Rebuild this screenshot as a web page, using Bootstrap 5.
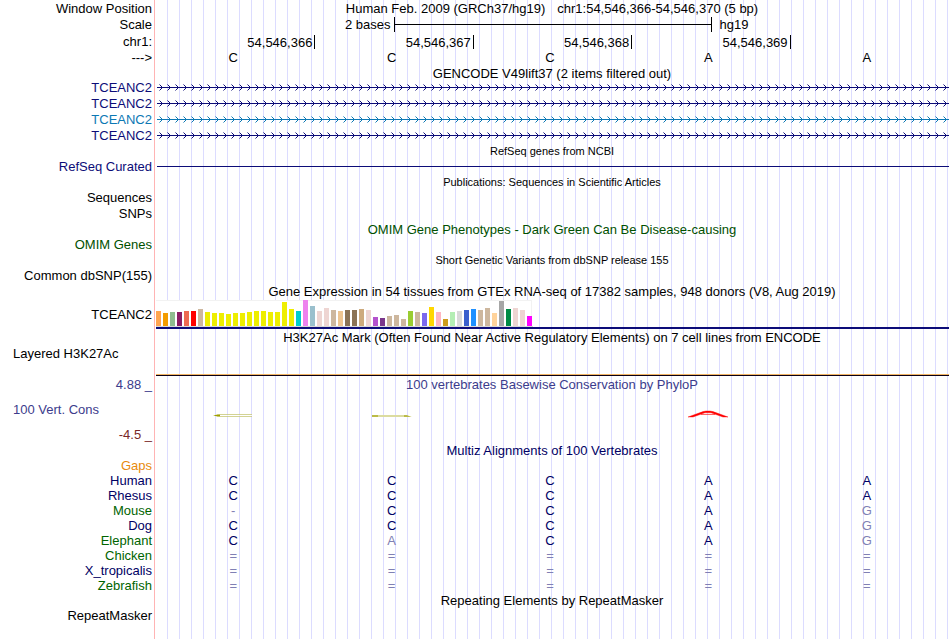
<!DOCTYPE html>
<html lang="en">
<head>
<meta charset="utf-8">
<meta name="viewport" content="width=device-width, initial-scale=1">
<title>Genome Browser hg19</title>
<link href="https://cdn.jsdelivr.net/npm/bootstrap@5.3.0/dist/css/bootstrap.min.css" rel="stylesheet">
<style>
:root { --label-w: 154px; --navy: #0c0c78; }
body { font-family: "Liberation Sans", Arial, sans-serif; font-size: 13px; line-height: 15px; color: #000; background: #fff; }
.browser {
  background:
    linear-gradient(#ffb4b4, #ffb4b4) var(--label-w) 0 / 1px 100% no-repeat,
    linear-gradient(#fff, #fff) 0 0 / 156px 100% no-repeat,
    repeating-linear-gradient(90deg, transparent 0 11px, #dcdcff 11px 12px) 156px 0;
}
.track { display: grid; grid-template-columns: var(--label-w) minmax(0, 1fr); min-height: 16px; align-items: center; white-space: nowrap; }
.track-15 { min-height: 15px; }
.track-17 { min-height: 17px; }
.track-top { align-items: start; }
.track-end { align-items: end; }
.track-tight { min-height: 0; height: 13px; align-items: start; }
.track-label { text-align: right; padding-right: 2px; }
.track-label-start { text-align: left; padding-left: 13px; }
.track-title { grid-column: 2; text-align: center; }
.title-minor { font-size: 11px; line-height: 13px; }
.bases { display: grid; grid-template-columns: repeat(5, minmax(0, 1fr)); text-align: center; padding-right: 4px; }
.ticks { display: grid; grid-template-columns: repeat(5, minmax(0, 1fr)); text-align: right; padding: 0 1px 0 3px; }
.ticks span { border-right: 1px solid #000; padding-right: 2px; height: 14px; }
.scale-from { width: 30%; text-align: right; padding-right: 3px; }
.scale-bar { width: 40%; height: 15px; border: solid #000; border-width: 0 1px; display: flex; align-items: center; }
.scale-bar i { flex: 1; height: 1px; background: #000; }
.scale-row { margin-left: 1px; }
.span-line { margin: 0 1px 0 3px; }
.gene svg { display: block; width: 100%; height: 16px; }
.c-navy { color: var(--navy); }
.c-sky { color: #0c78b4; }
.c-omim { color: #005000; }
.c-cons { color: #3c3c8c; }
.c-neg { color: #782828; }
.c-gaps { color: #e88a0c; }
.c-deep { color: #000064; }
.c-green { color: #006400; }
.faint { color: #8080b4; }
.refseq-line { height: 1px; background: var(--navy); }
.expression { margin: 0 1px 0 2px; border-bottom: 2px solid var(--navy); }
.gtex { display: inline-flex; align-items: flex-end; gap: 2px; height: 26px; background: #fff; box-shadow: inset 0 1px #f2f2f2, inset -1px 0 #f2f2f2; vertical-align: top; }
.gtex i { width: 5px; }
.gtex-base { height: 1px; width: 377px; background: #d8d8d8; }
.histone { height: 2px; margin: 0 1px 0 2px; background: #0c0014; border-top: 1px solid #f0b464; }
.histone-row { min-height: 30px; align-items: stretch; }
.cons { min-height: 66px; align-items: stretch; padding-top: 1px; }
.cons svg { display: block; margin: 18px auto 0; }
</style>
</head>
<body>
<main class="browser min-vh-100">
  <div class="track"><div class="track-label">Window Position</div><div class="d-flex justify-content-center"><span class="me-2 pe-1">Human Feb. 2009 (GRCh37/hg19)</span><span>chr1:54,546,366-54,546,370 (5 bp)</span></div></div>
  <div class="track track-17"><div class="track-label">Scale</div><div class="d-flex scale-row"><span class="scale-from">2 bases</span><span class="scale-bar"><i></i></span><span class="ms-2">hg19</span></div></div>
  <div class="track track-17"><div class="track-label">chr1:</div><div class="ticks"><span>54,546,366</span><span>54,546,367</span><span>54,546,368</span><span>54,546,369</span></div></div>
  <div class="track track-top"><div class="track-label">---&gt;</div><div class="bases"><span>C</span><span>C</span><span>C</span><span>A</span><span>A</span></div></div>

  <div class="track track-tight"><div class="track-title">GENCODE V49lift37 (2 items filtered out)</div></div>
  <svg width="0" height="0" class="d-block" aria-hidden="true"><defs>
    <pattern id="chevrons" width="8" height="16" patternUnits="userSpaceOnUse"><path d="M3 6h1v1h1v1h1v1H5v1H4v1H3v-1h1V9h1V8H4V7H3z" fill="#0c0c78"/><path d="M2 5h1v1H2zM2 11h1v1H2z" fill="#0c0c78" opacity=".5"/></pattern>
    <pattern id="chevrons-sky" width="8" height="16" patternUnits="userSpaceOnUse"><path d="M3 6h1v1h1v1h1v1H5v1H4v1H3v-1h1V9h1V8H4V7H3z" fill="#0c78b4"/><path d="M2 5h1v1H2zM2 11h1v1H2z" fill="#0c78b4" opacity=".5"/></pattern>
  </defs></svg>
  <div class="track c-navy"><div class="track-label">TCEANC2</div><div class="gene span-line"><svg><rect width="100%" height="16" fill="url(#chevrons)"/><rect y="8" width="100%" height="1" fill="#0c0c78"/></svg></div></div>
  <div class="track c-navy"><div class="track-label">TCEANC2</div><div class="gene span-line"><svg><rect width="100%" height="16" fill="url(#chevrons)"/><rect y="8" width="100%" height="1" fill="#0c0c78"/></svg></div></div>
  <div class="track c-sky"><div class="track-label">TCEANC2</div><div class="gene span-line"><svg><rect width="100%" height="16" fill="url(#chevrons-sky)"/><rect y="8" width="100%" height="1" fill="#0c78b4"/></svg></div></div>
  <div class="track c-navy"><div class="track-label">TCEANC2</div><div class="gene span-line"><svg><rect width="100%" height="16" fill="url(#chevrons)"/><rect y="8" width="100%" height="1" fill="#0c0c78"/></svg></div></div>

  <div class="track track-15 track-end"><div class="track-title title-minor">RefSeq genes from NCBI</div></div>
  <div class="track c-navy"><div class="track-label">RefSeq Curated</div><div class="span-line refseq-line"></div></div>

  <div class="track track-15 track-end"><div class="track-title title-minor">Publications: Sequences in Scientific Articles</div></div>
  <div class="track"><div class="track-label">Sequences</div></div>
  <div class="track"><div class="track-label">SNPs</div></div>

  <div class="track c-omim"><div class="track-title">OMIM Gene Phenotypes - Dark Green Can Be Disease-causing</div></div>
  <div class="track track-15 c-omim"><div class="track-label">OMIM Genes</div></div>

  <div class="track track-15 track-end"><div class="track-title title-minor">Short Genetic Variants from dbSNP release 155</div></div>
  <div class="track"><div class="track-label">Common dbSNP(155)</div></div>

  <div class="track track-17"><div class="track-title">Gene Expression in 54 tissues from GTEx RNA-seq of 17382 samples, 948 donors (V8, Aug 2019)</div></div>
  <div class="track"><div class="track-label">TCEANC2</div><div class="expression"><div class="gtex" id="gtex"></div><div class="gtex-base"></div></div></div>

  <div class="track track-17"><div class="track-title">H3K27Ac Mark (Often Found Near Active Regulatory Elements) on 7 cell lines from ENCODE</div></div>
  <div class="track histone-row"><div class="track-label track-label-start">Layered H3K27Ac</div><div class="d-flex flex-column justify-content-end"><div class="histone"></div></div></div>

  <div class="track cons">
    <div class="d-flex flex-column justify-content-between">
      <div class="track-label c-cons">4.88 _</div>
      <div class="track-label track-label-start c-cons">100 Vert. Cons</div>
      <div class="track-label c-neg">-4.5 _</div>
    </div>
    <div>
      <div class="text-center c-cons">100 vertebrates Basewise Conservation by PhyloP</div>
      <div class="bases">
        <svg width="40" height="8" viewBox="0 0 40 8"><path d="M0 5.5 7 4v3z" fill="#a0a000"/><path d="M4 4.5H39M4 6.5H39" stroke="#c8c878" stroke-width=".8"/><path d="M7 5.5H39" stroke="#fff" stroke-width=".6"/></svg>
        <svg width="40" height="8" viewBox="0 0 40 8"><path d="M0 5h34l6 2H0z" fill="#dcdca0"/><path d="M0 5h6v2H0zM32 5h3l4 2h-7z" fill="#a0a000" opacity=".55"/></svg>
        <span></span>
        <svg width="40" height="8" viewBox="0 0 40 8"><path d="M0 7 15 1.6 18 1h4l3 .6L40 7h-5L23 2.8h-6L5 7z" fill="#f00" stroke="#f00" stroke-width=".4"/><path d="M13 4.5h14" stroke="#f00" stroke-width=".6"/></svg>
        <span></span>
      </div>
    </div>
  </div>

  <div class="track track-end c-deep"><div class="track-title">Multiz Alignments of 100 Vertebrates</div></div>
  <div class="track track-15 c-gaps"><div class="track-label">Gaps</div></div>
  <div class="track track-15 c-deep"><div class="track-label">Human</div><div class="bases"><span>C</span><span>C</span><span>C</span><span>A</span><span>A</span></div></div>
  <div class="track track-15 c-deep"><div class="track-label">Rhesus</div><div class="bases"><span>C</span><span>C</span><span>C</span><span>A</span><span>A</span></div></div>
  <div class="track track-15 c-deep"><div class="track-label c-green">Mouse</div><div class="bases"><span class="faint">-</span><span>C</span><span>C</span><span>A</span><span class="faint">G</span></div></div>
  <div class="track track-15 c-deep"><div class="track-label">Dog</div><div class="bases"><span>C</span><span>C</span><span>C</span><span>A</span><span class="faint">G</span></div></div>
  <div class="track track-15 c-deep"><div class="track-label c-green">Elephant</div><div class="bases"><span>C</span><span class="faint">A</span><span>C</span><span>A</span><span class="faint">G</span></div></div>
  <div class="track track-15"><div class="track-label c-green">Chicken</div><div class="bases faint"><span>=</span><span>=</span><span>=</span><span>=</span><span>=</span></div></div>
  <div class="track track-15"><div class="track-label c-deep">X_tropicalis</div><div class="bases faint"><span>=</span><span>=</span><span>=</span><span>=</span><span>=</span></div></div>
  <div class="track track-15"><div class="track-label c-green">Zebrafish</div><div class="bases faint"><span>=</span><span>=</span><span>=</span><span>=</span><span>=</span></div></div>

  <div class="track track-15"><div class="track-title">Repeating Elements by RepeatMasker</div></div>
  <div class="track track-15"><div class="track-label">RepeatMasker</div></div>
</main>
<script src="https://cdn.jsdelivr.net/npm/bootstrap@5.3.0/dist/js/bootstrap.bundle.min.js"></script>
<script>
// One bar per tissue: [height in px, colour]
const tissues = [
  [15,'#ffa54f'],[13,'#f39c00'],[14,'#8fbc8f'],[14,'#8b1c62'],[15,'#ee6a50'],[15,'#ff0000'],[17,'#cdb79e'],
  [14,'#eeee00'],[13,'#eeee00'],[13,'#eeee00'],[12,'#eeee00'],[13,'#eeee00'],[13,'#eeee00'],[14,'#eeee00'],
  [15,'#eeee00'],[15,'#eeee00'],[14,'#eeee00'],[14,'#eeee00'],[24,'#eeee00'],[17,'#eeee00'],[15,'#00cdcd'],
  [26,'#ee82ee'],[20,'#9ac0cd'],[15,'#eed5d2'],[18,'#eed5d2'],[16,'#cdb79e'],[15,'#eec591'],[16,'#8b7355'],
  [16,'#8b7355'],[17,'#cdaa7d'],[16,'#eed5d2'],[9,'#b452cd'],[8,'#7a378b'],[10,'#cdb79e'],[11,'#cdb79e'],
  [7,'#cdb79e'],[15,'#9acd32'],[14,'#cdb79e'],[13,'#7b68ee'],[19,'#ffd700'],[14,'#ffb6c1'],[7,'#cd9b1d'],
  [14,'#b4eeb4'],[15,'#d9d9d9'],[16,'#3a5fcd'],[17,'#1e90ff'],[16,'#cdb79e'],[18,'#cdb79e'],[13,'#ffd39b'],
  [25,'#a6a6a6'],[17,'#008b45'],[18,'#eed5d2'],[16,'#eed5d2'],[10,'#ff00ff']
];
document.getElementById('gtex').innerHTML = tissues
  .map(([h, c]) => `<i style="height:${h}px;background:${c}"></i>`).join('');
</script>
</body>
</html>
